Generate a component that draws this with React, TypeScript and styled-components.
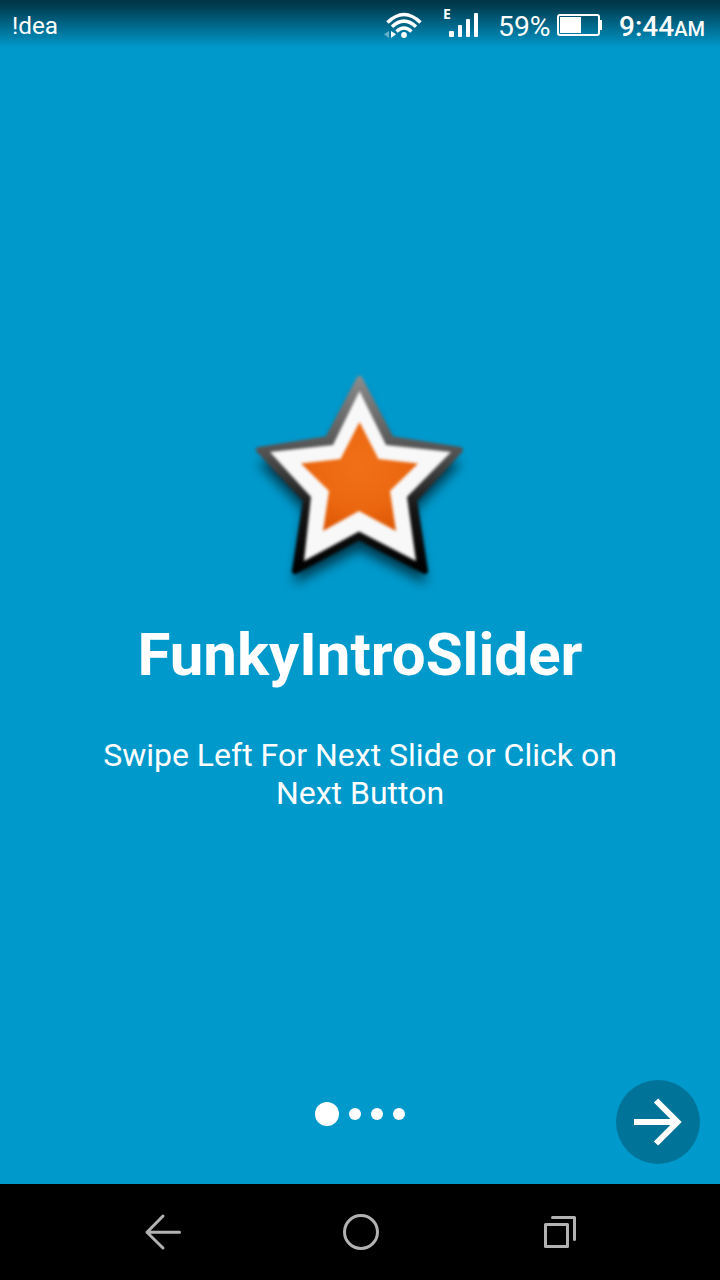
import React from 'react';
import styled, { createGlobalStyle } from 'styled-components';

const GlobalStyle = createGlobalStyle`
  * { box-sizing: border-box; }
  body { margin: 0; background: #0099cc; font-family: Roboto, "Liberation Sans", sans-serif; color: #fff; }
`;

const Screen = styled.div`
  display: flex;
  flex-direction: column;
  width: 720px;
  height: 1280px;
  background: #0099cc;
  overflow: hidden;
`;

const StatusBar = styled.header`
  display: flex;
  align-items: flex-start;
  height: 50px;
  padding: 0 15px 0 12px;
  background: linear-gradient(#003647 0px, #003d51 6px, #0099cc 48px);
`;

const StatusText = styled.span<{ $size: number; $weight?: number; $width?: number; $left?: number; $top: number }>`
  flex: none;
  width: ${p => (p.$width ? `${p.$width}px` : 'auto')};
  font-size: ${p => p.$size}px;
  font-weight: ${p => p.$weight ?? 400};
  line-height: 30px;
  margin: ${p => p.$top}px 0 0 ${p => p.$left ?? 0}px;
  white-space: nowrap;
`;

const Spacer = styled.div`
  flex: 1;
`;

const StatusIcon = styled.svg`
  flex: none;
  display: block;
`;

const Signal = styled.div`
  display: flex;
  width: 55px;
  height: 50px;
`;

const NetworkType = styled.span`
  width: 6px;
  margin-top: 6px;
  font: 700 14px/16px "Noto Sans", sans-serif;
`;

const Meridiem = styled.small`
  font-size: 20px;
  font-weight: 500;
`;

const Slide = styled.main`
  display: flex;
  flex-direction: column;
  align-items: center;
  height: 1020px;
  padding-top: 310px;
`;

const Star = styled.svg`
  display: block;
  flex: none;
`;

const Title = styled.h1`
  margin: 20px 0 0;
  font-size: 60px;
  font-weight: 700;
  line-height: 70px;
`;

const Description = styled.p`
  width: 560px;
  margin: 46px 0 0;
  font-size: 32px;
  line-height: 38px;
  text-align: center;
`;

const Controls = styled.footer`
  display: grid;
  grid-template-columns: 1fr auto 1fr;
  height: 114px;
  padding: 10px 20px 0;
`;

const Dots = styled.div`
  grid-column: 2;
  display: flex;
  align-items: center;
  gap: 10px;
  height: 68px;
`;

const Dot = styled.i<{ $active?: boolean }>`
  width: ${p => (p.$active ? 24 : 12)}px;
  height: ${p => (p.$active ? 24 : 12)}px;
  border-radius: 50%;
  background: #fff;
`;

const NextButton = styled.button`
  justify-self: end;
  width: 84px;
  height: 84px;
  padding: 0;
  border: 0;
  border-radius: 50%;
  background: #007399;
`;

const NavBar = styled.nav`
  flex: none;
  display: flex;
  justify-content: space-between;
  align-items: center;
  height: 96px;
  padding: 0 140px;
  background: #000;
`;

const NavIcon = styled.svg`
  display: block;
  fill: none;
  stroke: #b2b2b2;
  stroke-width: 3;
  stroke-linecap: round;
  stroke-linejoin: round;
`;

export default function App() {
  return (
    <>
      <GlobalStyle />
      <Screen>
        <StatusBar>
          <StatusText $size={24.3} $top={11}>!dea</StatusText>
          <Spacer />
          <StatusIcon width="59" height="50" viewBox="384 0 59 50" fill="none" stroke="#fff" strokeWidth="3.5">
            <path d="M387.5 22.5 Q404 6.5 420.5 22.5" />
            <path d="M392 26.8 Q404 15.5 416 26.8" />
            <path d="M396.5 31.5 Q404 24.5 411.5 31.5" />
            <circle cx="404" cy="35" r="2.9" fill="#fff" stroke="none" />
            <path d="M391 31 L396 34.3 L391 38Z" fill="#fff" stroke="none" />
            <path d="M389 31 L384 34.3 L389 38Z" fill="#fff" opacity=".4" stroke="none" />
          </StatusIcon>
          <Signal>
            <NetworkType>E</NetworkType>
            <StatusIcon width="32" height="50" viewBox="449 0 32 50" fill="#fff">
              <rect x="449" y="31" width="5" height="6" rx="1" />
              <rect x="458" y="25" width="4" height="12" rx="1" />
              <rect x="466" y="19" width="4" height="18" rx="1" />
              <rect x="474" y="13" width="4" height="24" rx="1" />
            </StatusIcon>
          </Signal>
          <StatusText $size={28.3} $top={12} $width={52}>59%</StatusText>
          <StatusIcon width="52" height="50" viewBox="550 0 52 50">
            <rect x="558" y="15" width="41" height="20" rx="2" fill="none" stroke="#fff" strokeWidth="2" />
            <path d="M560 17H581V33H560ZM600 20H602V30H600Z" fill="#fff" />
          </StatusIcon>
          <StatusText $size={28} $weight={500} $top={12} $left={17} $width={86}>
            9:44<Meridiem>AM</Meridiem>
          </StatusText>
        </StatusBar>
        <Slide>
          <Star width="240" height="240" viewBox="0 0 240 240">
            <defs>
              <linearGradient id="rim" gradientUnits="userSpaceOnUse" x1="0" y1="15" x2="0" y2="213">
                <stop offset="0" stopColor="#8c8c8c" />
                <stop offset=".4" stopColor="#505050" />
                <stop offset=".68" stopColor="#151515" />
                <stop offset="1" stopColor="#000" />
              </linearGradient>
              <radialGradient id="core" cx=".5" cy=".4" r=".75">
                <stop offset="0" stopColor="#f07018" />
                <stop offset=".5" stopColor="#ec6810" />
                <stop offset="1" stopColor="#d85000" />
              </radialGradient>
              <filter id="shadow" x="-20%" y="-20%" width="140%" height="140%">
                <feGaussianBlur stdDeviation="6" />
              </filter>
              <filter id="soft" colorInterpolationFilters="sRGB">
                <feGaussianBlur stdDeviation="1.6" />
              </filter>
            </defs>
            <polygon points="119.5,17 151,77 221,90 174,139 186,211 119,177 54,211 65,139 18,90 88,77" fill="#000" opacity=".6" transform="translate(0 13)" filter="url(#shadow)" />
            <g filter="url(#soft)" strokeLinejoin="round">
              <polygon points="119.5,19 151,79 220,90 174,140 185,211 119,177 55,211 66,140 19,90 88,79" fill="url(#rim)" stroke="url(#rim)" strokeWidth="6" />
              <polygon points="119.5,31 146,85 211,92 167,137 176,201 119,171.5 64,201 71,137 30,92 93,85" fill="#f8f8f8" />
              <polygon points="119.5,62 138.5,99 178,103.5 150,131 156,171 119,151 83,171 89,131 61,103.5 100.5,99" fill="url(#core)" />
            </g>
          </Star>
          <Title>FunkyIntroSlider</Title>
          <Description>Swipe Left For Next Slide or Click on Next Button</Description>
        </Slide>
        <Controls>
          <Dots>
            <Dot $active />
            <Dot />
            <Dot />
            <Dot />
          </Dots>
          <NextButton aria-label="Next">
            <StatusIcon width="84" height="84" viewBox="0 0 84 84" fill="none" stroke="#fff" strokeWidth="6">
              <path d="M18 42H62M40 20.5L61.5 42L40 63.5" />
            </StatusIcon>
          </NextButton>
        </Controls>
        <NavBar>
          <NavIcon width="44" height="44" viewBox="140 1210 44 44">
            <path d="M179.5 1232.3H147M163 1216L147 1232.3L163 1248" />
          </NavIcon>
          <NavIcon width="44" height="44" viewBox="338 1210 44 44">
            <circle cx="361" cy="1232" r="16.5" />
          </NavIcon>
          <NavIcon width="44" height="44" viewBox="536 1210 44 44">
            <path d="M545.5 1224.5H567.5V1246.5H545.5ZM552.5 1217.5H574.5V1239.5" />
          </NavIcon>
        </NavBar>
      </Screen>
    </>
  );
}
